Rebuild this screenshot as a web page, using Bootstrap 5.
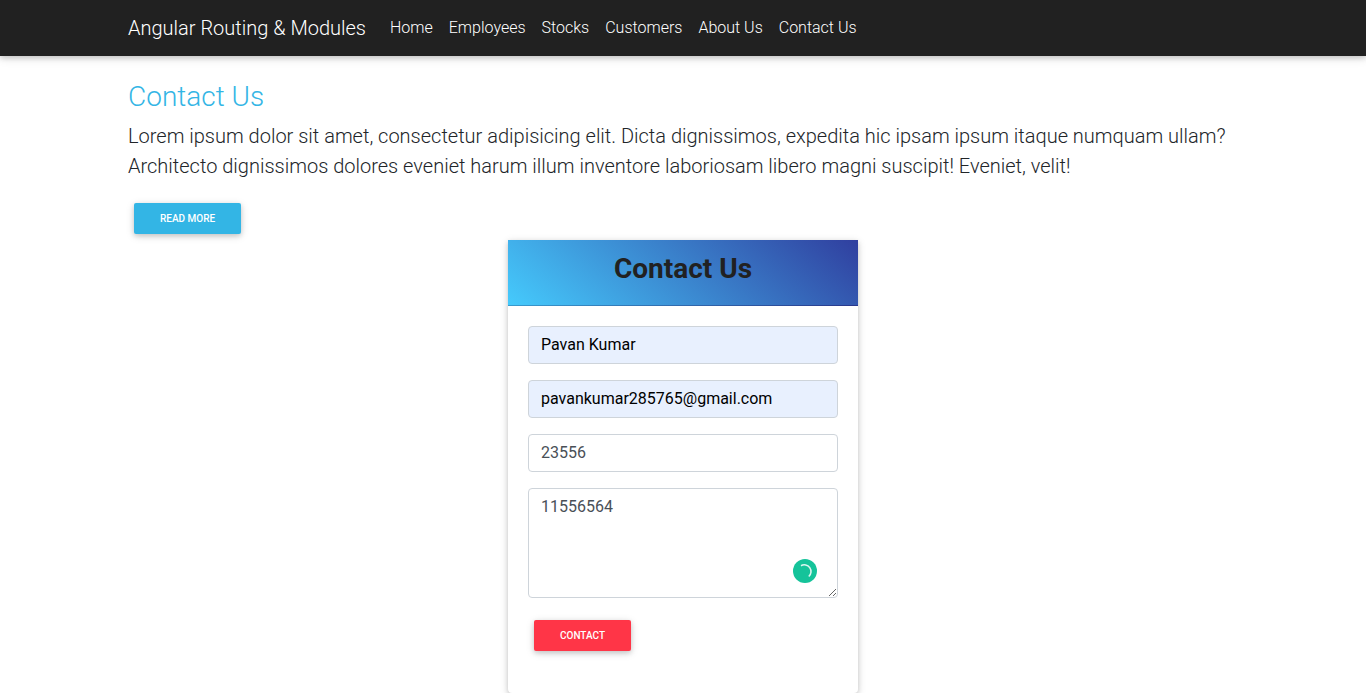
<!DOCTYPE html>
<html lang="en">
<head>
<meta charset="utf-8">
<meta name="viewport" content="width=device-width, initial-scale=1">
<title>Angular Routing &amp; Modules</title>
<link href="https://cdn.jsdelivr.net/npm/bootstrap@5.3.0/dist/css/bootstrap.min.css" rel="stylesheet">
<style>
  body { font-family: Roboto, "Liberation Sans", sans-serif; font-weight: 300; color: #212529; }
  .site-nav { background: #212121; box-shadow: 0 2px 5px rgba(0,0,0,.16), 0 2px 10px rgba(0,0,0,.12); }
  .page-width { max-width: 1140px; padding: 0 15px; }
  .site-nav .navbar-brand { font-size: 20px; line-height: 30px; margin-right: 16px; padding: 5px 0; }
  .site-nav .nav-link { color: #fff; padding: 8px; }
  .page-title { font-size: 28px; line-height: 33px; font-weight: 300; color: #33b5e5; margin-bottom: 8px; }
  .page-text { font-size: 20px; line-height: 30px; margin-bottom: 16px; }
  .action-btn { margin: 6px; padding: 8px 26px; border: 0; border-radius: 2px; font-size: 10px; line-height: 15px; font-weight: 500; text-transform: uppercase; color: #fff; box-shadow: 0 2px 5px rgba(0,0,0,.16), 0 2px 10px rgba(0,0,0,.12); }
  .action-info, .action-info:hover { background: #33b5e5; color: #fff; }
  .action-danger, .action-danger:hover { background: #ff3547; color: #fff; }
  .contact-card { width: 350px; max-width: 100%; border: 0; border-radius: 0 0 4px 4px; box-shadow: 0 2px 5px rgba(0,0,0,.16), 0 2px 10px rgba(0,0,0,.12); }
  .contact-card .contact-head { background: linear-gradient(40deg, #45cafc, #303f9f); border-bottom: 1px solid rgba(0,0,0,.125); padding: 12px 20px; border-radius: 0; }
  .contact-head h2 { font-size: 28px; line-height: 33px; font-weight: 700; color: #212121; margin-bottom: 8px; }
  .contact-body { padding: 20px; }
  .contact-card .form-control { font-weight: 400; color: #495057; border-color: #ced4da; border-radius: 4px; }
  .contact-card .filled { background: #e8f0fe; color: #000; }
  .contact-card textarea { height: 110px; }
  .checker { right: 21px; bottom: 15px; width: 24px; height: 24px; }
</style>
</head>
<body>
<nav class="navbar navbar-expand navbar-dark site-nav">
  <div class="container page-width">
    <a class="navbar-brand" href="#">Angular Routing &amp; Modules</a>
    <ul class="navbar-nav me-auto">
      <li class="nav-item"><a class="nav-link" href="#">Home</a></li>
      <li class="nav-item"><a class="nav-link" href="#">Employees</a></li>
      <li class="nav-item"><a class="nav-link" href="#">Stocks</a></li>
      <li class="nav-item"><a class="nav-link" href="#">Customers</a></li>
      <li class="nav-item"><a class="nav-link" href="#">About Us</a></li>
      <li class="nav-item"><a class="nav-link" href="#">Contact Us</a></li>
    </ul>
  </div>
</nav>
<main>
  <section class="container page-width pt-4">
    <h1 class="page-title">Contact Us</h1>
    <p class="page-text">Lorem ipsum dolor sit amet, consectetur adipisicing elit. Dicta dignissimos, expedita hic ipsam ipsum itaque numquam ullam? Architecto dignissimos dolores eveniet harum illum inventore laboriosam libero magni suscipit! Eveniet, velit!</p>
    <button type="button" class="btn action-btn action-info">Read more</button>
  </section>
  <section class="container page-width">
    <div class="card contact-card mx-auto">
      <div class="card-header contact-head text-center"><h2>Contact Us</h2></div>
      <div class="contact-body">
        <form class="pb-3">
          <input type="text" class="form-control filled mb-3" aria-label="Name" value="Pavan Kumar">
          <input type="email" class="form-control filled mb-3" aria-label="Email" value="pavankumar285765@gmail.com">
          <input type="text" class="form-control mb-3" aria-label="Phone" value="23556">
          <div class="position-relative mb-3">
            <textarea class="form-control" aria-label="Message">11556564</textarea>
            <svg class="checker position-absolute" viewBox="0 0 24 24" aria-hidden="true"><circle cx="12" cy="12" r="12" fill="#15c39a"/><path d="M8 6.700A6.700 6.700 0 0 1 15.800 17.500" fill="none" stroke="#fff" stroke-opacity=".85" stroke-width="1.600"/></svg>
          </div>
          <button type="button" class="btn action-btn action-danger">Contact</button>
        </form>
      </div>
    </div>
  </section>
</main>
<script src="https://cdn.jsdelivr.net/npm/bootstrap@5.3.0/dist/js/bootstrap.bundle.min.js"></script>
</body>
</html>
